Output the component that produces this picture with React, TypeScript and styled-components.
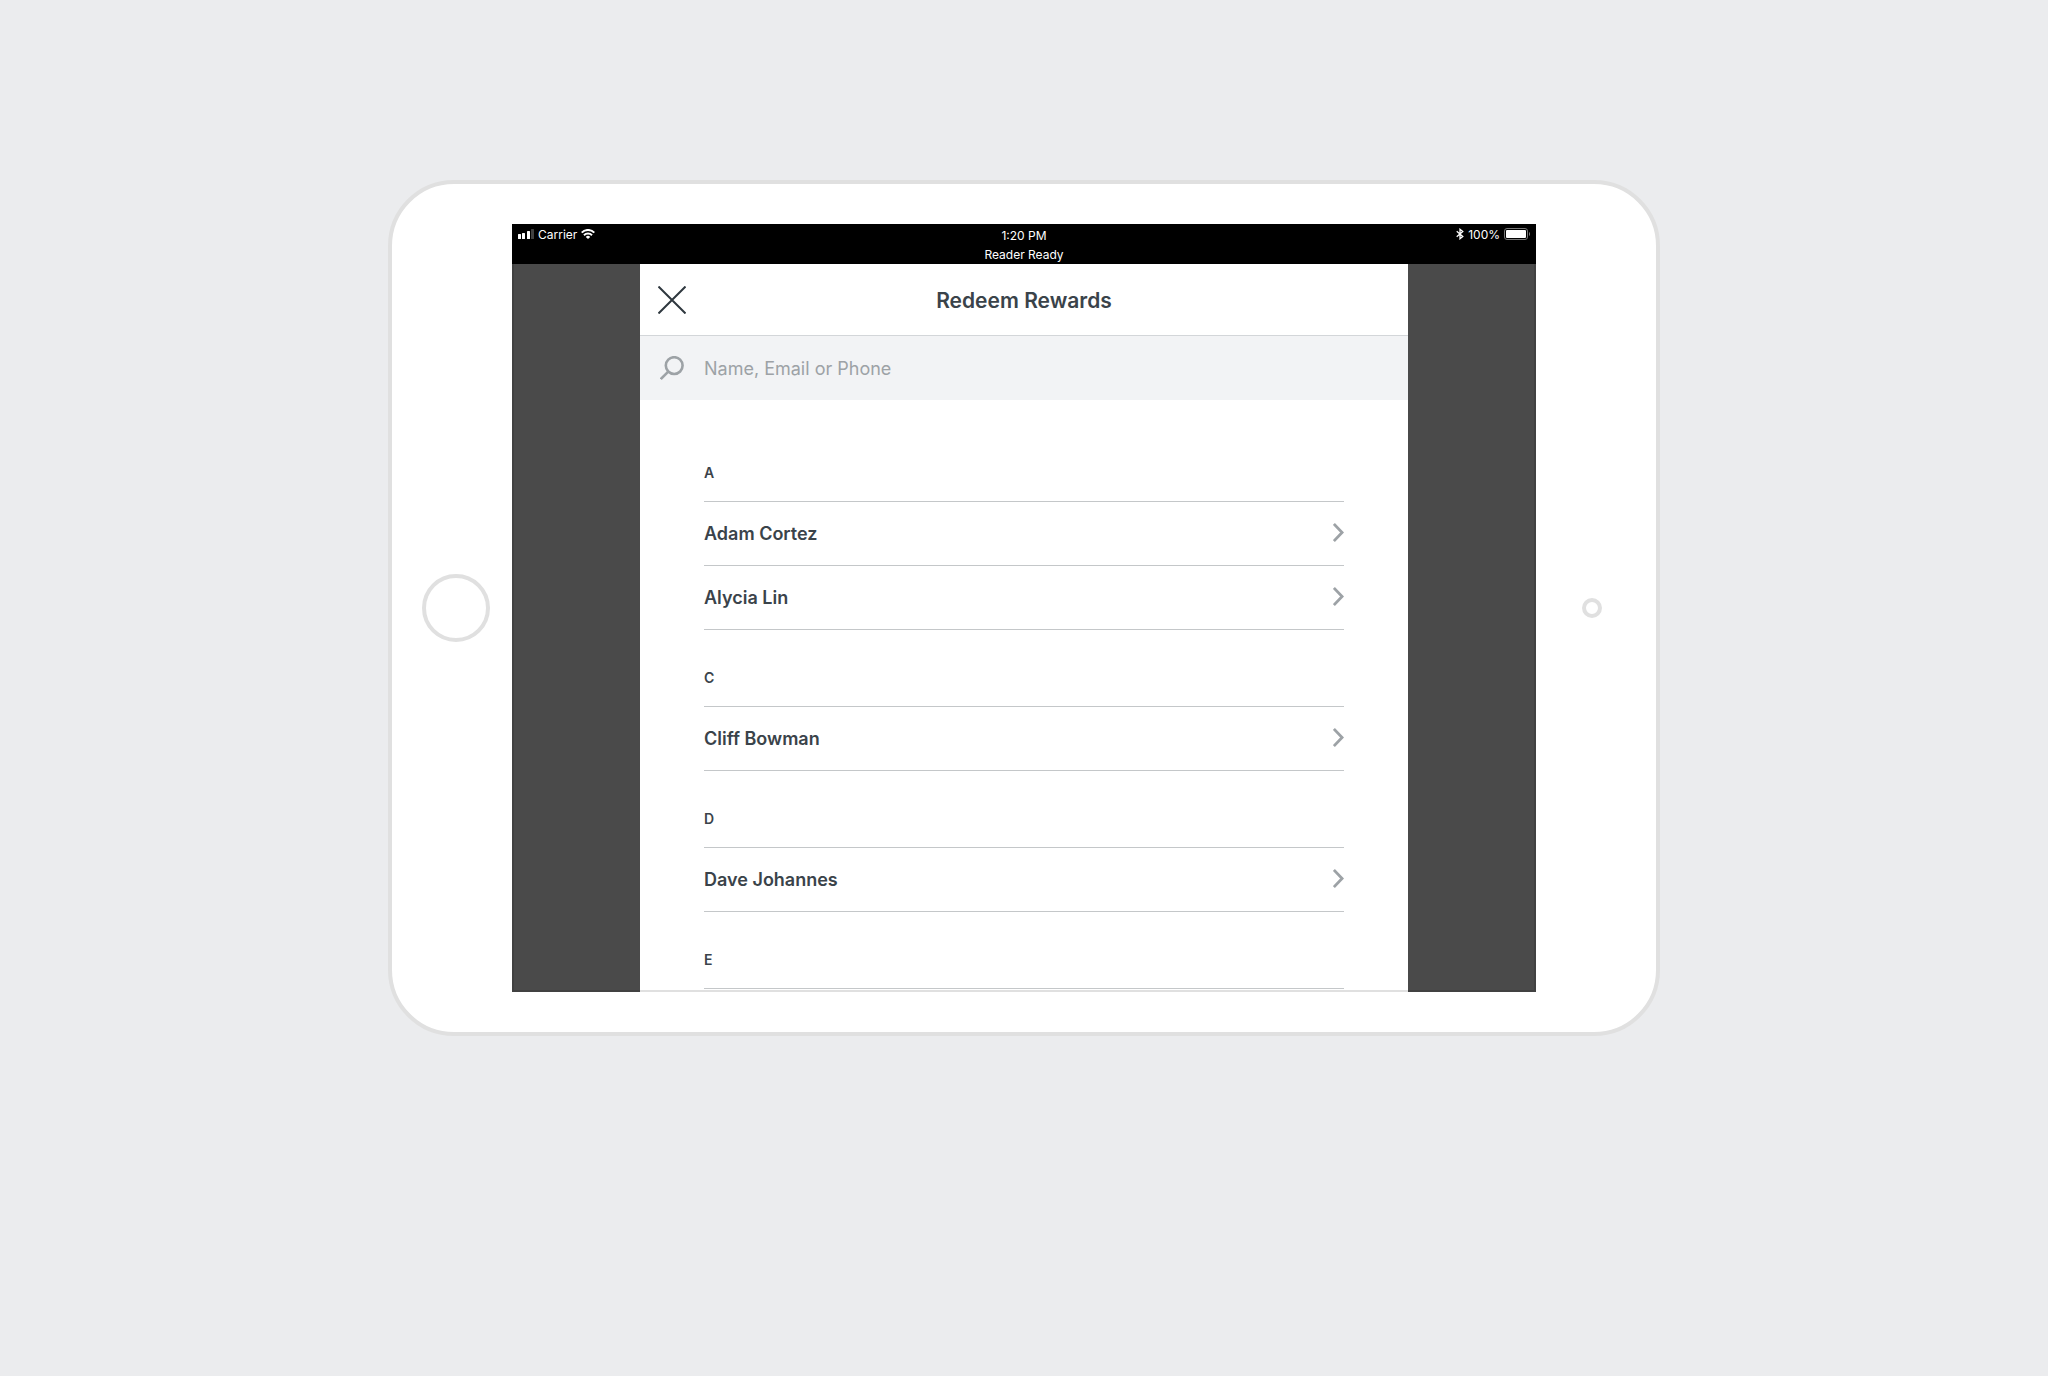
import React from "react";
import styled, { createGlobalStyle } from "styled-components";

const GlobalStyle = createGlobalStyle`
  *, *::before, *::after { box-sizing: border-box; }
  body {
    margin: 0;
    background: #ebecee;
    color: #3a434a;
    font-family: Inter, "Liberation Sans", sans-serif;
  }
  h1, h2, ul { margin: 0; padding: 0; }
`;

const Stage = styled.main`
  display: flex;
  justify-content: center;
  min-height: 100vh;
  padding: 180px 24px;
  align-items: flex-start;
`;

const Tablet = styled.div`
  display: grid;
  grid-template-columns: 120px minmax(0, 1fr) 120px;
  align-items: center;
  width: 100%;
  max-width: 1272px;
  padding: 40px 0;
  border: 4px solid #e0e0e0;
  border-radius: 66px;
  background: #fff;
`;

const HomeButton = styled.button`
  justify-self: center;
  width: 68px;
  height: 68px;
  margin-left: 8px;
  padding: 0;
  border: 4px solid #e0e0e0;
  border-radius: 50%;
  background: #fff;
`;

const Camera = styled.span`
  justify-self: center;
  width: 20px;
  height: 20px;
  margin-right: 8px;
  border: 4px solid #e0e0e0;
  border-radius: 50%;
`;

const Screen = styled.div`
  position: relative;
  display: flex;
  flex-direction: column;
  aspect-ratio: 4 / 3;
  overflow: hidden;
  background: #4a4a4a;

  &::after {
    content: "";
    position: absolute;
    inset: 0;
    border: 2px solid rgba(0, 0, 0, 0.12);
    pointer-events: none;
  }
`;

const StatusBar = styled.div`
  display: grid;
  grid-template-columns: 1fr auto 1fr;
  flex: none;
  height: 40px;
  padding: 2px 6px 0;
  background: #000;
  color: #fff;
  font-size: 12px;
  line-height: 19px;
`;

const StatusSide = styled.div<{ $end?: boolean }>`
  display: flex;
  align-items: center;
  justify-content: ${(p) => (p.$end ? "flex-end" : "flex-start")};
  gap: 4px;
  height: 16px;
`;

const StatusCenter = styled.div`
  text-align: center;
`;

const Sheet = styled.section`
  display: flex;
  flex-direction: column;
  flex: 1;
  width: 75%;
  min-height: 0;
  margin: 0 auto;
  background: #fff;
`;

const Header = styled.header`
  display: grid;
  grid-template-columns: 64px 1fr 64px;
  align-items: center;
  flex: none;
  height: 72px;
  border-bottom: 1px solid #d3d6d9;
`;

const CloseButton = styled.button`
  display: grid;
  place-items: center;
  height: 64px;
  padding: 0;
  border: 0;
  background: none;
  color: #2f383f;
`;

const Title = styled.h1`
  padding-top: 2px;
  font-size: 21px;
  font-weight: 600;
  line-height: 24px;
  text-align: center;
`;

const SearchBar = styled.label`
  display: grid;
  grid-template-columns: 64px 1fr;
  align-items: center;
  flex: none;
  height: 64px;
  background: #f2f3f5;
  color: #9da2a6;
`;

const SearchIcon = styled.svg`
  justify-self: center;
`;

const SearchInput = styled.input`
  width: 100%;
  height: 64px;
  padding: 0;
  border: 0;
  outline: 0;
  background: none;
  color: #3a434a;
  font: 400 18px/24px Inter, "Liberation Sans", sans-serif;

  &::placeholder {
    color: #9da2a6;
    opacity: 1;
  }
`;

const Directory = styled.div`
  flex: 1;
  min-height: 0;
  padding: 25px 64px 0;
  overflow: hidden;
`;

const Letter = styled.h2`
  height: 77px;
  padding-top: 40px;
  border-bottom: 1px solid #c4c7c9;
  font-size: 14px;
  font-weight: 600;
  line-height: 16px;
`;

const Contacts = styled.ul`
  list-style: none;
`;

const ContactButton = styled.button`
  display: flex;
  align-items: center;
  justify-content: space-between;
  width: 100%;
  height: 64px;
  padding: 0;
  border: 0;
  border-bottom: 1px solid #c4c7c9;
  background: none;
  color: inherit;
  font: 600 18px/24px Inter, "Liberation Sans", sans-serif;
  text-align: left;
`;

const ChevronIcon = styled.svg`
  margin-bottom: 2px;
`;

const groups = [
  { letter: "A", names: ["Adam Cortez", "Alycia Lin"] },
  { letter: "C", names: ["Cliff Bowman"] },
  { letter: "D", names: ["Dave Johannes"] },
  { letter: "E", names: [] },
];

const Signal = () => (
  <svg width="16" height="10" viewBox="0 0 16 10" fill="#fff" aria-hidden="true">
    <rect x="0" y="5" width="3" height="5" rx="0.5" />
    <rect x="4" y="4" width="3" height="6" rx="0.5" />
    <rect x="9" y="2" width="3" height="8" rx="0.5" />
    <rect x="13" y="0" width="3" height="10" rx="0.5" opacity="0.25" />
  </svg>
);

const Wifi = () => (
  <svg width="14" height="10" viewBox="0 0 14 10" fill="none" stroke="#fff" strokeWidth="2" aria-hidden="true">
    <path d="M0.7 3.6a8.8 8.8 0 0 1 12.6 0" />
    <path d="M3 6.2a5.6 5.6 0 0 1 8 0" />
    <path d="M7 10L4.8 7.9a3.1 3.1 0 0 1 4.4 0z" fill="#fff" stroke="none" />
  </svg>
);

const Bluetooth = () => (
  <svg width="8" height="12" viewBox="0 0 8 12" fill="none" stroke="#fff" strokeWidth="1.3" aria-hidden="true">
    <path d="M0.7 3.2L6.8 8.4 4 10.7V1.3l2.8 2.3L0.7 8.8" />
  </svg>
);

const Battery = () => (
  <svg width="26" height="12" viewBox="0 0 26 12" aria-hidden="true">
    <rect x="0.5" y="0.5" width="23" height="11" rx="2.5" fill="none" stroke="#777" />
    <rect x="2" y="2" width="20" height="8" rx="1" fill="#fff" />
    <path d="M25 4v4a2 2 0 0 0 1-2 2 2 0 0 0-1-2z" fill="#777" />
  </svg>
);

const Chevron = () => (
  <ChevronIcon width="11" height="19" viewBox="0 0 11 19" fill="none" stroke="#9da2a6" strokeWidth="2.8" aria-hidden="true">
    <path d="M0.9 1L9.1 9.5l-8.2 8.5" />
  </ChevronIcon>
);

export default function App() {
  return (
    <>
      <GlobalStyle />
      <Stage>
        <Tablet>
          <HomeButton type="button" aria-label="Home" />
          <Screen>
            <StatusBar>
              <StatusSide>
                <Signal />
                <span>Carrier</span>
                <Wifi />
              </StatusSide>
              <StatusCenter>
                <div>1:20 PM</div>
                <div>Reader Ready</div>
              </StatusCenter>
              <StatusSide $end>
                <Bluetooth />
                <span>100%</span>
                <Battery />
              </StatusSide>
            </StatusBar>
            <Sheet>
              <Header>
                <CloseButton type="button" aria-label="Close">
                  <svg width="28" height="28" viewBox="0 0 28 28" fill="none" stroke="currentColor" strokeWidth="2">
                    <path d="M0.5 0.5l27 27M27.5 0.5l-27 27" />
                  </svg>
                </CloseButton>
                <Title>Redeem Rewards</Title>
              </Header>
              <SearchBar>
                <SearchIcon width="24" height="24" viewBox="0 0 24 24" fill="none" stroke="currentColor" strokeWidth="2.6" aria-hidden="true">
                  <circle cx="14.2" cy="9.6" r="8.4" />
                  <path d="M8 15.8L0.8 23" />
                </SearchIcon>
                <SearchInput type="search" aria-label="Name, Email or Phone" placeholder="Name, Email or Phone" />
              </SearchBar>
              <Directory>
                {groups.map((group) => (
                  <section key={group.letter}>
                    <Letter>{group.letter}</Letter>
                    <Contacts>
                      {group.names.map((name) => (
                        <li key={name}>
                          <ContactButton type="button">
                            {name}
                            <Chevron />
                          </ContactButton>
                        </li>
                      ))}
                    </Contacts>
                  </section>
                ))}
              </Directory>
            </Sheet>
          </Screen>
          <Camera />
        </Tablet>
      </Stage>
    </>
  );
}
